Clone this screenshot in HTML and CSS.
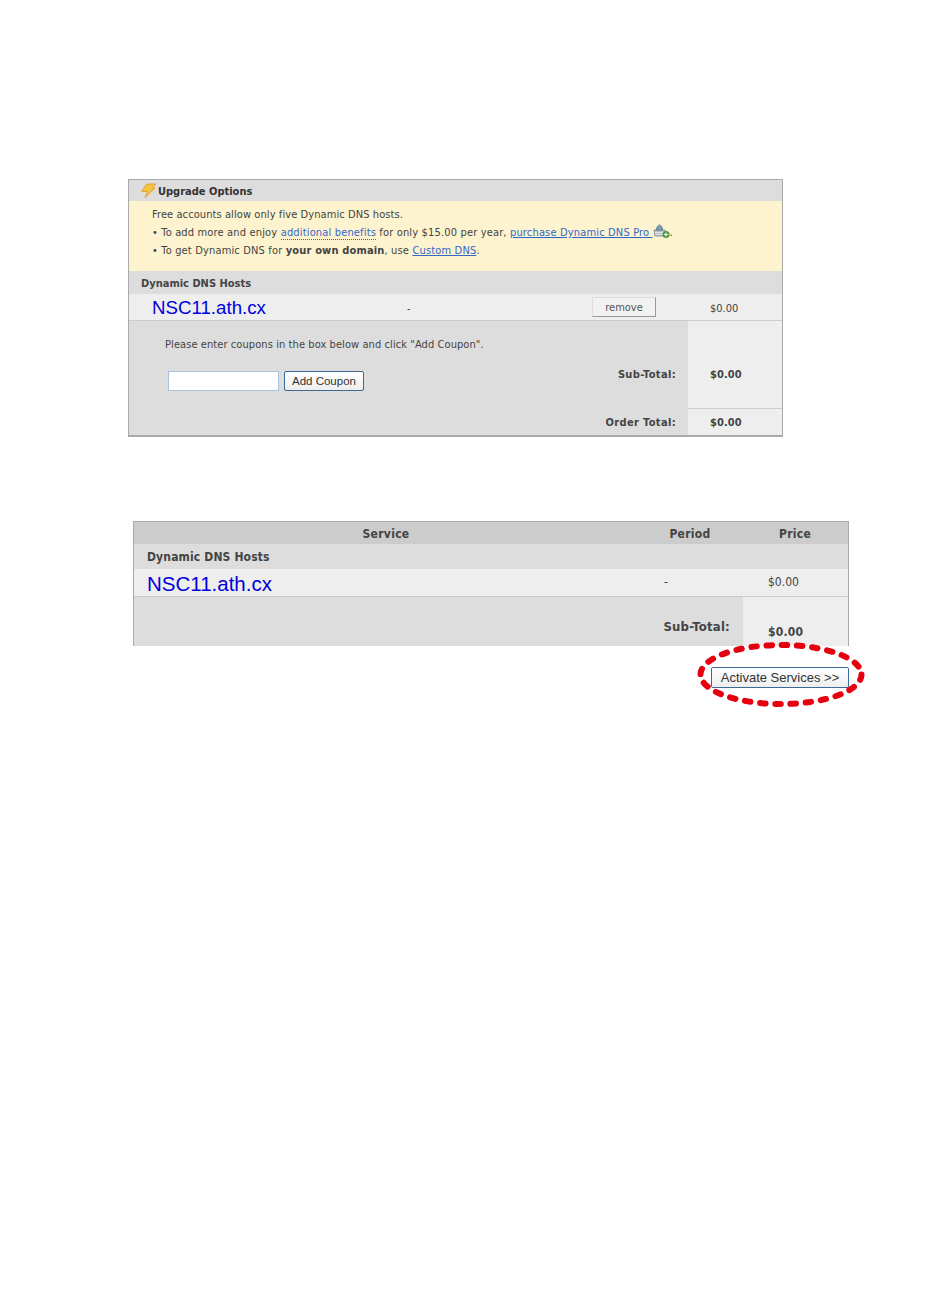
FILE: index.html
```html
<!DOCTYPE html>
<html>
<head>
   <meta charset="UTF-8">
   <title>Dynamic DNS order</title>
   <link rel="stylesheet" href="styles.css">
</head>
<body>

	<div class="panel upgrade">
		<div class="upgrade_title">
			<svg class="bolt" width="17" height="15" viewBox="0 0 17 15"><path d="M7 1h9l-4 4h3L5 14.500l2.500-6H1.500z" fill="#f4c542" stroke="#e2a32e" stroke-width="1"/></svg>
			<b>Upgrade Options</b>
		</div>
		<div class="notice">
			<div class="notice_lead">Free accounts allow only five Dynamic DNS hosts.</div>
			<div>&bull; To add more and enjoy <a class="dotted" href="#">additional benefits</a> for only $15.00 per year, <a href="#">purchase Dynamic DNS Pro <svg class="basket" width="17" height="14" viewBox="0 0 17 14"><path d="M1 6h11l-1 6H2z" fill="#b9c0c4" stroke="#8b9499"/><path d="M2 8.500h9M2.500 10.500h8" stroke="#e4e7e8"/><path d="M3.500 6c0-6.500 6-6.500 6 0z" fill="#7f9db3" stroke="#5f7f95"/><circle cx="13" cy="10.500" r="3.500" fill="#4f9a3c"/><path d="M11 10.500h4M13 8.500v4" stroke="#fff"/></svg></a>.</div>
			<div>&bull; To get Dynamic DNS for <b>your own domain</b>, use <a href="#">Custom DNS</a>.</div>
		</div>
		<div class="group_title">Dynamic DNS Hosts</div>
		<div class="host_row">
			<div class="host_name">NSC11.ath.cx</div>
			<div class="host_period">-</div>
			<div class="host_action"><button class="btn_remove">remove</button></div>
			<div class="host_price">$0.00</div>
		</div>
		<div class="totals">
			<div class="coupon">
				<p>Please enter coupons in the box below and click "Add Coupon".</p>
				<div class="coupon_form">
					<input type="text" class="coupon_input">
					<button class="btn_blue btn_coupon">Add Coupon</button>
				</div>
			</div>
			<div class="sub_label">Sub-Total:</div>
			<div class="sub_value">$0.00</div>
			<div class="order_label">Order Total:</div>
			<div class="order_value">$0.00</div>
		</div>
	</div>

	<div class="panel review">
		<div class="review_head">
			<div class="head_service">Service</div>
			<div class="head_period">Period</div>
			<div class="head_price">Price</div>
		</div>
		<div class="group_title">Dynamic DNS Hosts</div>
		<div class="review_row">
			<div class="review_name">NSC11.ath.cx</div>
			<div class="review_period">-</div>
			<div class="review_price">$0.00</div>
		</div>
		<div class="review_total">
			<div class="review_label">Sub-Total:</div>
			<div class="review_value">$0.00</div>
		</div>
	</div>

	<div class="activate">
		<button class="btn_blue btn_activate">Activate Services &gt;&gt;</button>
		<svg class="oval" width="172" height="70" viewBox="0 0 172 70"><ellipse cx="87" cy="34.500" rx="80.500" ry="29.500" fill="none" stroke="#e6000f" stroke-width="6" stroke-dasharray="5.500 9.700" stroke-linecap="round"/></svg>
	</div>

</body>
</html>
```

FILE: styles.css
```css
html,body{
	height: 100%;
}
body{
	margin: 0;
	min-height: 1313px;
	background: #fff;
	font-family: "DejaVu Sans Condensed", "DejaVu Sans", sans-serif;
	font-size: 11px;
	color: #444;
}
.panel{
	box-sizing: border-box;
	border: 1px solid #aaa;
	border-bottom-width: 2px;
}
.upgrade{
	width: 655px;
	height: 258px;
	margin: 179px 0 0 128px;
	background: #ddd;
	display: flex;
	flex-direction: column;
}
.upgrade_title{
	flex: none;
	box-sizing: border-box;
	height: 21px;
	display: flex;
	align-items: center;
	padding: 1px 0 0 11px;
	gap: 1px;
	color: #333;
}
.bolt{
	margin-top: -1px;
}
.notice{
	flex: none;
	height: 70px;
	box-sizing: border-box;
	background: #fdf3cf;
	padding: 5px 0 0 23px;
	line-height: 18px;
	letter-spacing: 0.160px;
}
.notice .notice_lead{
	letter-spacing: 0.085px;
}
.notice a{
	color: #36c;
}
.notice .dotted{
	text-decoration: none;
	border-bottom: 1px dotted #36c;
}
.basket{
	vertical-align: -2px;
}
.group_title{
	flex: none;
	height: 23px;
	line-height: 26px;
	padding-left: 12px;
	font-weight: bold;
	color: #444;
}
.host_row{
	flex: none;
	height: 27px;
	box-sizing: border-box;
	background: #eee;
	border-bottom: 1px solid #ccc;
	display: grid;
	grid-template-columns: 278px 185px 118px 1fr;
	align-items: center;
}
.host_name{
	font-family: "Liberation Sans", sans-serif;
	font-size: 18.700px;
	color: #00d;
	padding: 2px 0 0 23px;
}
.host_period,.host_price{
	padding-top: 2px;
}
.btn_remove{
	display: block;
	width: 64px;
	height: 20px;
	padding: 1px 0 0;
	font: 11px "DejaVu Sans Condensed", "DejaVu Sans", sans-serif;
	color: #555;
	background: #f2f2f2;
	border: 1px solid #ddd;
	border-right-color: #999;
	border-bottom-color: #999;
}
.totals{
	flex: 1;
	min-height: 0;
	display: grid;
	grid-template-columns: 1fr 94px;
	grid-template-rows: 88px 26px;
}
.coupon{
	grid-column: 1;
	grid-row: 1 / 3;
	padding: 17px 0 0 36px;
}
.coupon p{
	margin: 0 0 20px;
	letter-spacing: 0.080px;
}
.coupon_form{
	display: flex;
	gap: 5px;
	margin-left: 3px;
}
.coupon_input{
	box-sizing: border-box;
	width: 111px;
	height: 20px;
	border: 1px solid #a9c3dc;
	background: #fff;
}
.btn_blue{
	font-family: "Liberation Sans", sans-serif;
	color: #333;
	background: linear-gradient(#fff, #eee);
	border: 1px solid #3d6a94;
	border-radius: 2px;
	padding: 0;
}
.btn_coupon{
	width: 80px;
	height: 20px;
	font-size: 11.500px;
}
.sub_label,.order_label{
	grid-column: 1;
	text-align: right;
	padding-right: 12px;
	font-weight: bold;
	letter-spacing: 0.350px;
}
.sub_label{
	grid-row: 1;
	line-height: 107px;
}
.order_label{
	grid-row: 2;
	height: 26px;
	line-height: 28px;
}
.sub_value,.order_value{
	background: #eee;
	font-weight: bold;
	padding-left: 22px;
	letter-spacing: 0.100px;
}
.sub_value{
	grid-column: 2;
	grid-row: 1;
	line-height: 107px;
	border-bottom: 1px solid #ccc;
	height: 88px;
	box-sizing: border-box;
}
.order_value{
	grid-column: 2;
	grid-row: 2;
	height: 26px;
	line-height: 28px;
}
.review{
	width: 716px;
	height: 125px;
	margin: 84px 0 0 133px;
	background: #ddd;
	border-bottom-width: 0;
	display: flex;
	flex-direction: column;
}
.review_head{
	flex: none;
	box-sizing: border-box;
	height: 22px;
	padding-top: 1px;
	background: #ccc;
	display: grid;
	grid-template-columns: 504px 104px 1fr;
	align-items: center;
	font-size: 12px;
	font-weight: bold;
	text-align: center;
	letter-spacing: 0.300px;
}
.review .group_title{
	height: 25px;
	line-height: 27px;
	padding-left: 13px;
	font-size: 12px;
	letter-spacing: 0.150px;
}
.review_row{
	flex: none;
	height: 28px;
	box-sizing: border-box;
	background: #eee;
	border-bottom: 1px solid #ccc;
	display: grid;
	grid-template-columns: 530px 104px 1fr;
	align-items: center;
	font-size: 12px;
}
.review_name{
	font-family: "Liberation Sans", sans-serif;
	font-size: 20.500px;
	color: #00d;
	padding: 2px 0 0 13px;
}
.review_period,.review_price{
	padding-bottom: 1px;
}
.review_total{
	flex: 1;
	display: grid;
	grid-template-columns: 1fr 105px;
	font-weight: bold;
	font-size: 13px;
}
.review_label{
	text-align: right;
	padding: 22px 13px 0 0;
	letter-spacing: 0.200px;
}
.review_value{
	background: #eee;
	padding: 26px 0 0 25px;
	font-size: 12px;
	line-height: 18px;
	letter-spacing: 0.200px;
}
.activate{
	width: 716px;
	margin-left: 133px;
	display: flex;
	justify-content: flex-end;
	position: relative;
	padding-top: 21px;
}
.btn_activate{
	width: 138px;
	height: 21px;
	font-size: 13px;
}
.oval{
	position: absolute;
	right: -17px;
	top: -6px;
}
```
